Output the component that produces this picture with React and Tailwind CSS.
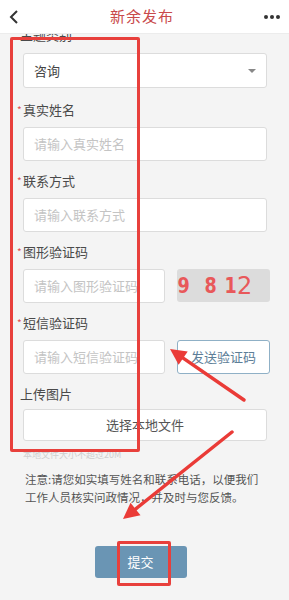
import React from 'react';

const font = { fontFamily: '"Noto Sans CJK SC", "Noto Sans", sans-serif' };

const Label = ({ text, required = true }) => (
  <div className="flex items-center h-[18px] pl-[17px] text-[13px] text-[#4a4a4a]">
    {required ? <span className="w-[6px] text-[10px] text-[#e0504f] leading-none">*</span> : <span className="w-[3px]" />}
    <span>{text}</span>
  </div>
);

const Input = ({ placeholder, className = '' }) => (
  <div className={`h-[34px] bg-white border border-[#dcdcdc] rounded-[3px] flex items-center px-[10px] text-[13px] text-[#c4c4c4] ${className}`}>
    {placeholder}
  </div>
);

const Arrow = ({ x1, y1, x2, y2 }) => {
  const dx = x2 - x1;
  const dy = y2 - y1;
  const len = Math.sqrt(dx * dx + dy * dy);
  const ux = dx / len;
  const uy = dy / len;
  const bx = x2 - ux * 16;
  const by = y2 - uy * 16;
  const px = -uy;
  const py = ux;
  const head = `${x2},${y2} ${bx + px * 8},${by + py * 8} ${bx - px * 8},${by - py * 8}`;
  return (
    <g>
      <line x1={x1} y1={y1} x2={bx} y2={by} stroke="#ea3b37" strokeWidth="3.5" strokeLinecap="round" />
      <polygon points={head} fill="#ea3b37" />
    </g>
  );
};

export default function App() {
  return (
    <div className="relative w-[289px] h-[600px] overflow-hidden bg-[#f4f4f4]" style={font}>
      {/* header */}
      <div className="relative z-10 h-[34px] bg-white border-b border-[#ececec] flex items-center justify-between px-[8px]">
        <svg width="12" height="16" viewBox="0 0 12 16">
          <polyline points="9,2 3,8 9,14" fill="none" stroke="#333" strokeWidth="2" />
        </svg>
        <div className="text-[15px] text-[#c94a4b] tracking-[1px]">新余发布</div>
        <div className="flex gap-[2px] pr-[1px]">
          <span className="w-[4px] h-[4px] rounded-full bg-[#333]" />
          <span className="w-[4px] h-[4px] rounded-full bg-[#333]" />
          <span className="w-[4px] h-[4px] rounded-full bg-[#333]" />
        </div>
      </div>

      <div className="pl-[23px] pr-[22px]">
        {/* scrolled label, partly under the header */}
        <div className="-mt-[8px] h-[18px] -ml-[3px] text-[13px] leading-[18px] text-[#4a4a4a]">主题类别</div>
        <div className="mt-[9px] h-[35px] bg-white border border-[#dcdcdc] rounded-[3px] flex items-center justify-between pl-[10px] pr-[10px] text-[13px] text-[#444]">
          <span>咨询</span>
          <span className="w-0 h-0 border-l-[4px] border-r-[4px] border-t-[4px] border-l-transparent border-r-transparent border-t-[#888]" />
        </div>
      </div>

      <div className="mt-[13px]"><Label text="真实姓名" /></div>
      <div className="mt-[8px] pl-[23px] pr-[22px]"><Input placeholder="请输入真实姓名" /></div>

      <div className="mt-[11px]"><Label text="联系方式" /></div>
      <div className="mt-[8px] pl-[23px] pr-[22px]"><Input placeholder="请输入联系方式" /></div>

      <div className="mt-[11px]"><Label text="图形验证码" /></div>
      <div className="mt-[8px] pl-[23px] pr-[19px] flex gap-[12px]">
        <Input placeholder="请输入图形验证码" className="w-[142px]" />
        <div className="flex-1 h-[33px] bg-[#dcdcdc] rounded-[3px] flex items-center text-[#e8585a] font-bold text-[22px] leading-none" style={{ fontFamily: '"DejaVu Sans", sans-serif' }}>
          <span className="inline-block -ml-[1px] scale-x-[0.8]">9</span>
          <span className="inline-block ml-[12px] scale-x-[0.8]">8</span>
          <span className="inline-block ml-[4px] scale-x-[0.8]">1</span>
          <span className="inline-block -ml-[1px] text-[24px] font-normal">2</span>
        </div>
      </div>

      <div className="mt-[11px]"><Label text="短信验证码" /></div>
      <div className="mt-[8px] pl-[23px] pr-[19px] flex gap-[12px]">
        <Input placeholder="请输入短信验证码" className="w-[142px]" />
        <div className="flex-1 h-[34px] bg-white border border-[#8fb0c6] rounded-[3px] flex items-center justify-center text-[13px] text-[#5d7e98]">
          发送验证码
        </div>
      </div>

      <div className="mt-[11px]"><Label text="上传图片" required={false} /></div>
      <div className="mt-[6px] pl-[23px] pr-[22px]">
        <div className="h-[32px] bg-white border border-[#dcdcdc] rounded-[3px] flex items-center justify-center text-[13px] text-[#555]">
          选择本地文件
        </div>
      </div>
      <div className="mt-[7px] pl-[23px] text-[9px] text-[#cfcfcf] leading-[14px]">本地文件大小不超过20M</div>

      <div className="mt-[8px] pl-[25px] pr-[20px] text-[11.5px] leading-[18px] text-[#555]">
        注意:请您如实填写姓名和联系电话，以便我们工作人员核实问政情况，并及时与您反馈。
      </div>

      <div className="mt-[40px] flex justify-center pr-[8px]">
        <div className="w-[92px] h-[32px] bg-[#6a95b4] rounded-[3px] flex items-center justify-center text-[13px] text-white">
          提交
        </div>
      </div>

      {/* annotations */}
      <div className="absolute z-20 left-[10px] top-[37px] w-[130px] h-[415px] border-[3px] border-[#e8403c] rounded-[2px]" />
      <div className="absolute z-20 left-[117px] top-[541px] w-[54px] h-[45px] border-[3px] border-[#e8403c] rounded-[2px]" />
      <svg className="absolute z-20 left-0 top-0" width="289" height="600">
        <Arrow x1={244} y1={400} x2={170} y2={349} />
        <Arrow x1={232} y1={432} x2={123} y2={519} />
      </svg>
    </div>
  );
}
